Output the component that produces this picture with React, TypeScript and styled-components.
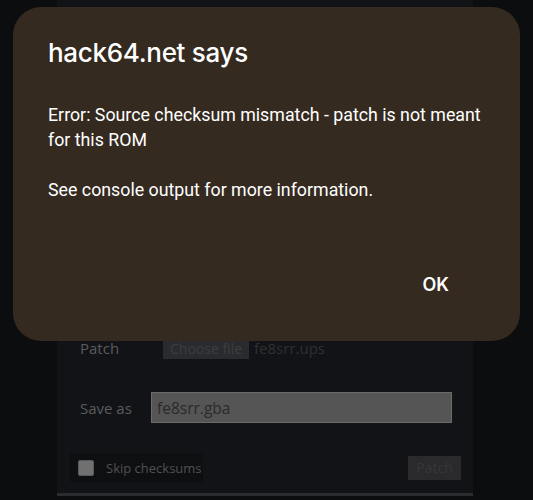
import React from "react";
import styled, { createGlobalStyle } from "styled-components";

const GlobalStyle = createGlobalStyle`
  html, body {
    margin: 0;
    padding: 0;
    background: #0c0d0f;
  }
  * { box-sizing: border-box; }
`;

const Page = styled.div`
  position: relative;
  width: 533px;
  height: 500px;
  overflow: hidden;
  background: #0c0d0f;
`;

const Panel = styled.section`
  margin-left: 57px;
  width: 416px;
  height: 496px;
  background: #121316;
  border-bottom: 3px solid #2a2c30;
  padding: 270px 12px 11px 23px;
  display: flex;
  flex-direction: column;
  font-family: "Open Sans", "DejaVu Sans", sans-serif;
`;

const Row = styled.div<{ $gap: number; $h: number }>`
  display: flex;
  align-items: center;
  margin-top: ${(p) => p.$gap}px;
  height: ${(p) => p.$h}px;
`;

const Label = styled.label`
  width: 71px;
  flex: none;
  font-size: 15px;
  color: #5a5b5d;
`;

const FileButton = styled.span`
  margin-left: 12px;
  height: 22px;
  padding: 0 7px;
  display: inline-flex;
  align-items: center;
  background: #2a2b2e;
  color: #3c3d40;
  font-size: 14px;
`;

const FileName = styled.span`
  margin-left: 5px;
  font-size: 15px;
  color: #2f3034;
`;

const TextInput = styled.div`
  width: 301px;
  height: 31px;
  background: #555555;
  border: 1px solid #6b6b6b;
  display: flex;
  align-items: center;
  padding-left: 5px;
  font-size: 15.5px;
  color: #2a2a2a;
`;

const Footer = styled.div`
  display: flex;
  align-items: center;
  justify-content: space-between;
  margin-top: 30px;
  height: 29px;
  margin-left: -10px;
`;

const CheckWrap = styled.label`
  display: flex;
  align-items: center;
  gap: 12px;
  height: 29px;
  width: 133px;
  padding-left: 8px;
  background: #0e0f11;
  font-size: 13px;
  white-space: nowrap;
  color: #505154;
`;

const Box = styled.span`
  flex: none;
  width: 16px;
  height: 16px;
  background: #707070;
  border: 1px solid #5a5a5a;
  border-radius: 2px;
`;

const PatchButton = styled.span`
  width: 53px;
  height: 24px;
  display: flex;
  align-items: center;
  justify-content: center;
  background: #2a2a2c;
  color: #363638;
  font-size: 14px;
`;

const Dialog = styled.div`
  position: absolute;
  top: 7px;
  left: 13px;
  width: 507px;
  height: 334px;
  border-radius: 28px;
  background: #352a20;
  padding: 29px 35px 0 35px;
  display: flex;
  flex-direction: column;
  color: #ffffff;
`;

const Title = styled.h1`
  margin: 0;
  font-family: Inter, Roboto, sans-serif;
  font-weight: 500;
  font-size: 26px;
  line-height: 34px;
  letter-spacing: -0.3px;
`;

const Message = styled.p`
  margin: 32px 0 0 0;
  font-family: Roboto, "Noto Sans", sans-serif;
  font-size: 17.8px;
  line-height: 25px;
  white-space: pre-line;
`;

const Actions = styled.div`
  margin-top: auto;
  margin-bottom: 40px;
  display: flex;
  justify-content: flex-end;
`;

const OkButton = styled.button`
  background: transparent;
  border: none;
  color: #ffffff;
  font-family: Inter, Roboto, sans-serif;
  font-weight: 600;
  font-size: 18px;
  padding: 6px 36px 6px 12px;
  cursor: pointer;
`;

export default function App() {
  return (
    <>
      <GlobalStyle />
      <Page>
        <Panel>
          <Row $gap={0} $h={22}>
            <Label>ROM</Label>
            <FileButton>Choose file</FileButton>
            <FileName>fe8.gba</FileName>
          </Row>
          <Row $gap={45} $h={22}>
            <Label>Patch</Label>
            <FileButton>Choose file</FileButton>
            <FileName>fe8srr.ups</FileName>
          </Row>
          <Row $gap={33} $h={31}>
            <Label>Save as</Label>
            <TextInput>fe8srr.gba</TextInput>
          </Row>
          <Footer>
            <CheckWrap>
              <Box />
              Skip checksums
            </CheckWrap>
            <PatchButton>Patch</PatchButton>
          </Footer>
        </Panel>
        <Dialog role="dialog">
          <Title>hack64.net says</Title>
          <Message>
            {"Error: Source checksum mismatch - patch is not meant for this ROM\n\nSee console output for more information."}
          </Message>
          <Actions>
            <OkButton>OK</OkButton>
          </Actions>
        </Dialog>
      </Page>
    </>
  );
}
